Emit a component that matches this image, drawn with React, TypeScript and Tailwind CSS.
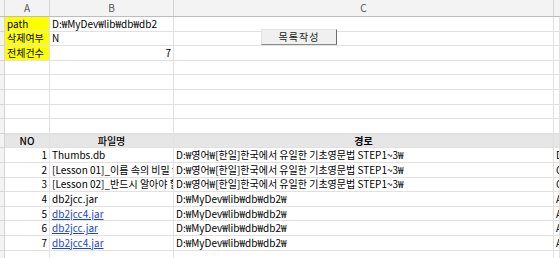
import React from "react";

interface FileRow {
  no: number;
  name: string;
  link: boolean;
  path: string;
  kind: string;
}

const rows: FileRow[] = [
  { no: 1, name: "Thumbs.db", link: false, path: "D:₩영어₩[한일]한국에서 유일한 기초영문법 STEP1~3₩", kind: "Data Base File" },
  { no: 2, name: "[Lesson 01]_이름 속의 비밀 to부정사.mp4", link: false, path: "D:₩영어₩[한일]한국에서 유일한 기초영문법 STEP1~3₩", kind: "GOM Media file" },
  { no: 3, name: "[Lesson 02]_반드시 알아야 할 동명사.mp4", link: false, path: "D:₩영어₩[한일]한국에서 유일한 기초영문법 STEP1~3₩", kind: "GOM Media file" },
  { no: 4, name: "db2jcc.jar", link: false, path: "D:₩MyDev₩lib₩db₩db2₩", kind: "ALZip JAR File" },
  { no: 5, name: "db2jcc4.jar", link: true, path: "D:₩MyDev₩lib₩db₩db2₩", kind: "ALZip JAR File" },
  { no: 6, name: "db2jcc.jar", link: true, path: "D:₩MyDev₩lib₩db₩db2₩", kind: "ALZip JAR File" },
  { no: 7, name: "db2jcc4.jar", link: true, path: "D:₩MyDev₩lib₩db₩db2₩", kind: "ALZip JAR File" },
];

const grid = "grid grid-cols-[5px_45px_124px_380px_1fr]";

function Cell({ className = "", children }: { className?: string; children?: React.ReactNode }) {
  return (
    <div className={`h-[14.6px] flex items-center overflow-hidden whitespace-nowrap border-r border-b border-[#e1e1e1] px-[2px] ${className}`}>
      {children}
    </div>
  );
}

function RowHead() {
  return <div className="h-[14.6px] bg-[#f3f3f3] border-r border-b border-[#d4d4d4]" />;
}

export default function App() {
  return (
    <div className="relative w-[560px] h-[258px] overflow-hidden bg-white text-[10px] leading-none text-black font-['Noto_Sans_CJK_KR',sans-serif]">
      {/* column letters */}
      <div className={`${grid} h-[17px] bg-[#f3f3f3] border-b border-[#bdbdbd] text-[#555]`}>
        <div className="border-r border-[#d4d4d4]" />
        <div className="flex items-center justify-center border-r border-[#d4d4d4]">A</div>
        <div className="flex items-center justify-center border-r border-[#d4d4d4]">B</div>
        <div className="flex items-center justify-center border-r border-[#d4d4d4]">C</div>
        <div />
      </div>

      {/* settings block */}
      <div className={grid}>
        <RowHead />
        <Cell className="bg-[#ffff00] border-[#9a9a9a]">path</Cell>
        <Cell className="border-[#7a7a7a]">D:₩MyDev₩lib₩db₩db2</Cell>
        <Cell />
        <Cell />

        <RowHead />
        <Cell className="bg-[#ffff00] border-[#9a9a9a]">삭제여부</Cell>
        <Cell className="border-[#7a7a7a]">N</Cell>
        <Cell />
        <Cell />

        <RowHead />
        <Cell className="bg-[#ffff00] border-[#9a9a9a]">전체건수</Cell>
        <Cell className="border-[#7a7a7a] justify-end">7</Cell>
        <Cell />
        <Cell />

        {[0, 1, 2, 3, 4].map((i) => (
          <React.Fragment key={i}>
            <RowHead />
            <Cell />
            <Cell />
            <Cell />
            <Cell />
          </React.Fragment>
        ))}

        {/* list header */}
        <RowHead />
        <Cell className="bg-[#e7e6e6] border-[#9a9a9a] border-t justify-center font-medium">NO</Cell>
        <Cell className="bg-[#e7e6e6] border-[#9a9a9a] border-t justify-center font-medium">파일명</Cell>
        <Cell className="bg-[#e7e6e6] border-[#9a9a9a] border-t justify-center font-bold">경로</Cell>
        <Cell className="bg-[#e7e6e6] border-[#9a9a9a] border-t" />

        {rows.map((r) => (
          <React.Fragment key={r.no}>
            <RowHead />
            <Cell className="justify-end border-[#d0d0d0]">{r.no}</Cell>
            <Cell className="border-[#d0d0d0]">
              <span className={r.link ? "text-[#1a47c8] underline" : ""}>{r.name}</span>
            </Cell>
            <Cell className="border-[#d0d0d0]">{r.path}</Cell>
            <Cell className="border-[#d0d0d0]">{r.kind}</Cell>
          </React.Fragment>
        ))}

        <RowHead />
        <Cell />
        <Cell />
        <Cell />
        <Cell />
      </div>

      {/* macro button */}
      <button className="absolute left-[261px] top-[29px] w-[76px] h-[16px] bg-[#f0f0f0] border border-t-[#e4e4e4] border-l-[#e4e4e4] border-r-[#6b6b6b] border-b-[#8a8a8a] text-[10px] text-[#222] flex items-center justify-center tracking-[1px]">
        목록작성
      </button>
    </div>
  );
}
